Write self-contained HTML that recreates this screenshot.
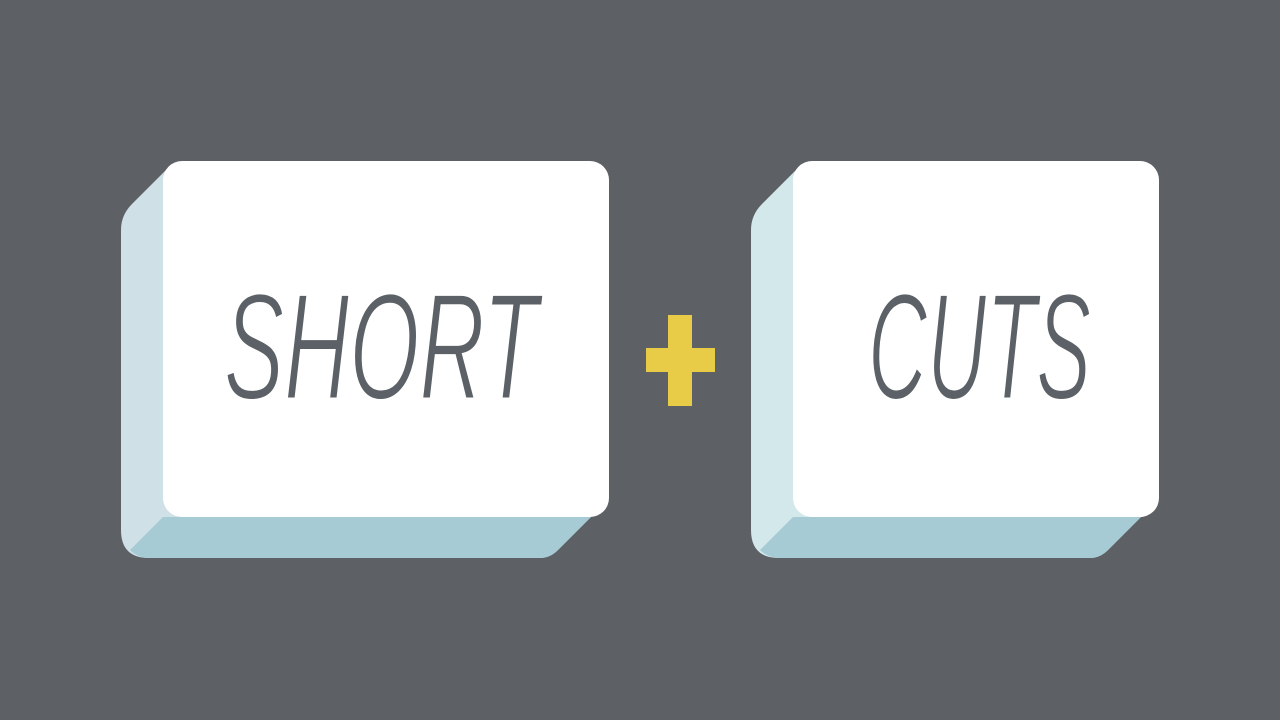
<!DOCTYPE html>
<html><head><style>html,body{margin:0;padding:0;background:#5d6166;}svg{display:block}</style></head>
<body>
<svg width="1280" height="720" viewBox="0 0 1280 720" xmlns="http://www.w3.org/2000/svg">
<rect width="1280" height="720" fill="#5d6166"/>
<!-- key 1 -->
<path d="M168,168 L132,204 Q121,215 121,230 L121,530 Q121,558 149,558 L540,558 Q550,558 558,550 L605,503 L605,200 Z" fill="#cfe0e6"/>
<path d="M163,517 L130,550 Q138,558 149,558 L540,558 Q550,558 558,550 L598,510 L590,517 Z" fill="#a7cbd5"/>
<rect x="163" y="161" width="446" height="356" rx="19" fill="#fff"/>
<text x="224" y="399" font-family="Liberation Sans, sans-serif" font-style="italic" font-size="152" fill="#5b6166" stroke="#fff" stroke-width="3" textLength="314" lengthAdjust="spacingAndGlyphs">SHORT</text>
<!-- plus -->
<rect x="646" y="348" width="69" height="24" fill="#e8cc47"/>
<rect x="668" y="315" width="24" height="91" fill="#e8cc47"/>
<!-- key 2 -->
<path d="M798,168 L762,204 Q751,215 751,230 L751,530 Q751,558 779,558 L1090,558 Q1100,558 1108,550 L1155,503 L1155,200 Z" fill="#d2e8ea"/>
<path d="M793,517 L760,550 Q768,558 779,558 L1090,558 Q1100,558 1108,550 L1148,510 L1140,517 Z" fill="#a7cbd5"/>
<rect x="793" y="161" width="366" height="356" rx="19" fill="#fff"/>
<text x="868" y="399" font-family="Liberation Sans, sans-serif" font-style="italic" font-size="152" fill="#5b6166" stroke="#fff" stroke-width="3" textLength="223" lengthAdjust="spacingAndGlyphs">CUTS</text>
</svg>
</body></html>
